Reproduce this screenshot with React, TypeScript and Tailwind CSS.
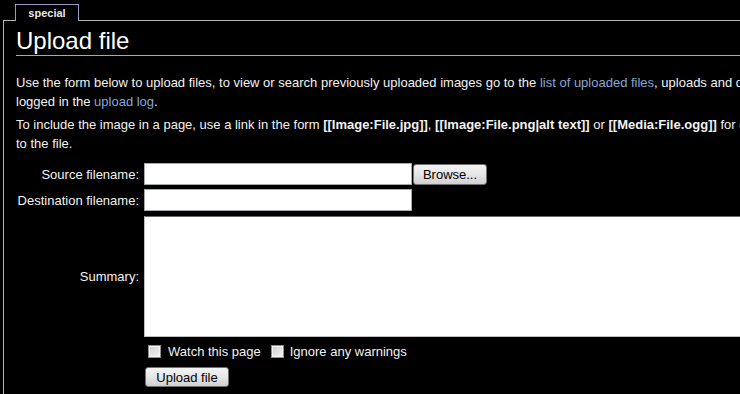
export default function App() {
  const link = "text-[#83a7dc]";
  const btn =
    "flex items-center justify-center rounded-[3px] border border-[#707070] bg-gradient-to-b from-[#f4f4f4] via-[#e6e6e6] to-[#d0d0d0] text-[13px] leading-[15px] text-black";
  const checkbox =
    "block h-[13px] w-[13px] border border-[#8f8f8f] bg-gradient-to-br from-[#cfcfcf] to-[#f4f4f4] shadow-[inset_0_0_0_1px_#f4f4f4]";
  return (
    <div className="h-[394px] w-[740px] overflow-hidden bg-black font-['Liberation_Sans',Arial,sans-serif] text-[#f2f2f2]">
      <div className="pl-[15px] pt-[4px]">
        <div className="relative z-10 -mb-px flex h-[17px] w-[64px] justify-center border border-b-0 border-[#9a9ac8] bg-black pt-[2px] text-[11px] font-bold leading-[13px] text-[#e8e8e8]">
          special
        </div>
      </div>
      <div className="ml-[3px] h-[420px] w-[900px] border-l border-t border-[#b4b4b4] pl-[12px] pt-[8px]">
        <h1 className="border-b border-[#aaaaaa] pb-[2px] text-[24px] leading-[24px] font-normal text-white">
          Upload file
        </h1>
        <div className="mt-[17px] whitespace-nowrap text-[13px] leading-[19px]">
          <p>
            Use the form below to upload files, to view or search previously uploaded images go to the{" "}
            <a className={link}>list of uploaded files</a>, uploads and deletions are also
            <br />
            logged in the <a className={link}>upload log</a>.
          </p>
          <p className="mt-[4px]">
            To include the image in a page, use a link in the form <b>[[Image:File.jpg]]</b>,{" "}
            <b>[[Image:File.png|alt text]]</b> or <b>[[Media:File.ogg]]</b> for directly linking
            <br />
            to the file.
          </p>
        </div>
        <div className="mt-[10px] grid grid-cols-[123px_auto] gap-x-[5px] text-[13px] leading-[19px]">
          <div className="self-center text-right">Source filename:</div>
          <div className="flex items-center">
            <input
              type="text"
              readOnly
              className="h-[22px] w-[268px] border border-[#a5a9ae] bg-white"
            />
            <button className={`${btn} ml-[1px] h-[21px] w-[74px]`}>Browse...</button>
          </div>

          <div className="mt-[4px] self-center text-right">Destination filename:</div>
          <div className="mt-[4px] flex">
            <input
              type="text"
              readOnly
              className="h-[22px] w-[268px] border border-[#a5a9ae] bg-white"
            />
          </div>

          <div className="mt-[5px] self-center text-right">Summary:</div>
          <div className="mt-[5px] flex">
            <textarea
              readOnly
              className="h-[121px] w-[760px] resize-none border border-[#c0c0c0] border-t-[#6a6a6a] bg-white"
            />
          </div>

          <div />
          <div className="mt-[5px] flex h-[19px] items-center">
            <span className={`${checkbox} ml-[4px]`} />
            <span className="ml-[7px]">Watch this page</span>
            <span className={`${checkbox} ml-[10px]`} />
            <span className="ml-[6px]">Ignore any warnings</span>
          </div>

          <div />
          <div className="mt-[6px] flex">
            <button className={`${btn} ml-[1px] h-[20px] w-[84px]`}>Upload file</button>
          </div>
        </div>
      </div>
    </div>
  );
}
